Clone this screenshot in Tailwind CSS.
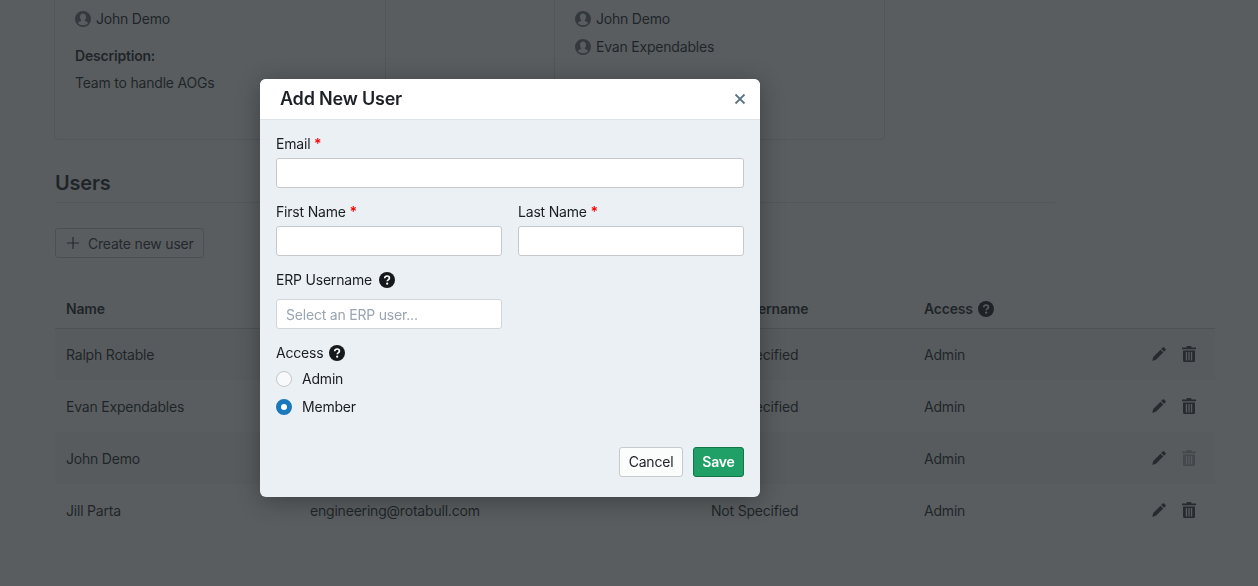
<!DOCTYPE html>
<html lang="en">
<head>
<meta charset="utf-8">
<title>Add New User</title>
<script src="https://cdn.jsdelivr.net/npm/@tailwindcss/browser@4"></script>
</head>
<body class="h-[586px] overflow-hidden bg-white font-['Inter',sans-serif] text-[14px] leading-5 tracking-[-0.2px] text-[#1a1e22]">
<main class="-mt-[40px] px-[55px]">
  <div class="-ml-px flex">
    <section class="box-border h-[180px] w-[332px] rounded-[4px] border border-[#dee2e6] px-5 pt-5">
      <p class="mb-2 font-semibold">Owner:</p>
      <p class="flex items-center gap-[5px]">
        <svg class="h-4 w-4 text-[#6c7177]" viewBox="0 0 16 16" fill="currentColor"><path fill-rule="evenodd" d="M8 0a8 8 0 1 1 0 16A8 8 0 0 1 8 0Zm0 2.600c-1.800 0-3 1.500-3 3.400 0 1.200.5 2.300 1.200 3 .2.300.1.700-.2.900l-2.300 1.200c-.3.200-.5.500-.5.800v.3c0 .7 1.900 2 4.800 2s4.800-1.300 4.800-2v-.3c0-.3-.2-.6-.5-.8L10 9.900c-.3-.2-.4-.6-.2-.9.700-.7 1.200-1.800 1.200-3 0-1.900-1.200-3.400-3-3.400Z"/></svg>
        John Demo
      </p>
      <p class="mt-[17px] font-semibold">Description:</p>
      <p class="mt-[7px]">Team to handle AOGs</p>
    </section>
    <section class="ml-[168px] box-border h-[180px] w-[331px] rounded-[4px] border border-[#dee2e6] px-5 pt-5">
      <p class="mb-2 font-semibold">Owner:</p>
      <p class="flex items-center gap-[5px]">
        <svg class="h-4 w-4 text-[#6c7177]" viewBox="0 0 16 16" fill="currentColor"><path fill-rule="evenodd" d="M8 0a8 8 0 1 1 0 16A8 8 0 0 1 8 0Zm0 2.600c-1.800 0-3 1.500-3 3.400 0 1.200.5 2.300 1.200 3 .2.300.1.700-.2.900l-2.300 1.200c-.3.200-.5.500-.5.800v.3c0 .7 1.900 2 4.800 2s4.800-1.300 4.800-2v-.3c0-.3-.2-.6-.5-.8L10 9.900c-.3-.2-.4-.6-.2-.9.700-.7 1.200-1.800 1.200-3 0-1.900-1.200-3.400-3-3.400Z"/></svg>
        John Demo
      </p>
      <p class="mt-2 flex items-center gap-[5px]">
        <svg class="h-4 w-4 text-[#6c7177]" viewBox="0 0 16 16" fill="currentColor"><path fill-rule="evenodd" d="M8 0a8 8 0 1 1 0 16A8 8 0 0 1 8 0Zm0 2.600c-1.800 0-3 1.500-3 3.400 0 1.200.5 2.300 1.200 3 .2.300.1.700-.2.900l-2.300 1.200c-.3.200-.5.500-.5.800v.3c0 .7 1.900 2 4.800 2s4.800-1.300 4.800-2v-.3c0-.3-.2-.6-.5-.8L10 9.900c-.3-.2-.4-.6-.2-.9.700-.7 1.200-1.800 1.200-3 0-1.900-1.200-3.400-3-3.400Z"/></svg>
        Evan Expendables
      </p>
      <p class="mt-[20px] font-semibold">Members:</p>
    </section>
  </div>

  <h2 class="mt-[29px] w-[1000px] border-b border-[#e4e7ea] pb-[5px] text-[20px] leading-7 font-semibold">Users</h2>

  <button class="mt-[25px] flex h-[30px] w-[149px] items-center gap-[9px] rounded-[3px] border border-[#c4c8cc] pl-[11px] text-[#2b3036]">
    <svg class="h-3 w-3" viewBox="0 0 12 12" fill="none" stroke="currentColor" stroke-width="1.200"><path d="M6 0v12M0 6h12"/></svg>
    <span class="pt-px">Create new user</span>
  </button>

  <table class="mt-8 w-[1160px] table-fixed border-collapse text-left">
    <colgroup>
      <col class="w-[244px]"><col class="w-[401px]"><col class="w-[213px]"><col class="w-[190px]"><col class="w-[112px]">
    </colgroup>
    <thead>
      <tr class="h-[38px] border-b border-[#cfd3d7]">
        <th class="px-[11px] font-semibold">Name</th>
        <th class="px-[11px] font-semibold">Email</th>
        <th class="px-[11px] font-semibold">ERP Username</th>
        <th class="px-[11px] font-semibold">
          <span class="flex items-center gap-[5px]">Access
            <svg class="h-4 w-4 text-[#16191c]" viewBox="0 0 16 16"><circle cx="8" cy="8" r="8" fill="currentColor"/><path d="M5.700 6.200c0-1.400 1-2.200 2.400-2.200 1.300 0 2.300.8 2.300 2 0 1-.6 1.500-1.200 1.900-.6.400-.9.600-.9 1.300" fill="none" stroke="#fff" stroke-width="1.700"/><circle cx="8.200" cy="11.700" r="1.100" fill="#fff"/></svg>
          </span>
        </th>
        <th></th>
      </tr>
    </thead>
    <tbody>
      <tr class="h-[52px] bg-[#f5f6f6]">
        <td class="px-[11px] pt-[2px]">Ralph Rotable</td><td class="px-[11px] pt-[2px]">ralph@rotabull.com</td><td class="px-[11px] pt-[2px]">Not Specified</td><td class="px-[11px] pt-[2px]">Admin</td>
        <td class="pl-[49px]"><span class="flex items-center gap-4 text-[#343a40]">
          <svg class="h-[14px] w-[14px]" viewBox="0 0 14 14" fill="currentColor"><path d="M10.600.6a1.200 1.200 0 0 1 1.700 0l1.100 1.100a1.200 1.200 0 0 1 0 1.700l-1.400 1.400-2.800-2.800ZM8.500 2.700l2.800 2.800-7.300 7.300L.2 14l1-3.900Z"/></svg>
          <svg class="h-4 w-[14px]" viewBox="0 0 14 16" fill="currentColor"><path fill-rule="evenodd" d="M5 0h4l.7 1.500H14v1.700H0V1.500h4.300ZM1 4.400h12V14.500A1.500 1.500 0 0 1 11.500 16h-9A1.500 1.500 0 0 1 1 14.500ZM3.800 6v8.400h1.300V6Zm2.550 0v8.400h1.300V6Zm2.550 0v8.400h1.300V6Z"/></svg>
        </span></td>
      </tr>
      <tr class="h-[52px]">
        <td class="px-[11px] pt-[2px]">Evan Expendables</td><td class="px-[11px] pt-[2px]">evan@rotabull.com</td><td class="px-[11px] pt-[2px]">Not Specified</td><td class="px-[11px] pt-[2px]">Admin</td>
        <td class="pl-[49px]"><span class="flex items-center gap-4 text-[#343a40]">
          <svg class="h-[14px] w-[14px]" viewBox="0 0 14 14" fill="currentColor"><path d="M10.600.6a1.200 1.200 0 0 1 1.700 0l1.100 1.100a1.200 1.200 0 0 1 0 1.700l-1.400 1.400-2.800-2.800ZM8.500 2.700l2.800 2.800-7.300 7.300L.2 14l1-3.900Z"/></svg>
          <svg class="h-4 w-[14px]" viewBox="0 0 14 16" fill="currentColor"><path fill-rule="evenodd" d="M5 0h4l.7 1.500H14v1.700H0V1.500h4.300ZM1 4.400h12V14.500A1.500 1.500 0 0 1 11.500 16h-9A1.500 1.500 0 0 1 1 14.500ZM3.800 6v8.400h1.300V6Zm2.550 0v8.400h1.300V6Zm2.550 0v8.400h1.300V6Z"/></svg>
        </span></td>
      </tr>
      <tr class="h-[52px] bg-[#f5f6f6]">
        <td class="px-[11px] pt-[2px]">John Demo</td><td class="px-[11px] pt-[2px]">john@rotabull.com</td><td class="px-[11px] pt-[2px]">jdemo</td><td class="px-[11px] pt-[2px]">Admin</td>
        <td class="pl-[49px]"><span class="flex items-center gap-4 text-[#343a40]">
          <svg class="h-[14px] w-[14px]" viewBox="0 0 14 14" fill="currentColor"><path d="M10.600.6a1.200 1.200 0 0 1 1.700 0l1.100 1.100a1.200 1.200 0 0 1 0 1.700l-1.400 1.400-2.800-2.800ZM8.500 2.700l2.800 2.800-7.300 7.300L.2 14l1-3.900Z"/></svg>
          <svg class="h-4 w-[14px] opacity-40" viewBox="0 0 14 16" fill="currentColor"><path fill-rule="evenodd" d="M5 0h4l.7 1.500H14v1.700H0V1.500h4.300ZM1 4.400h12V14.500A1.500 1.500 0 0 1 11.500 16h-9A1.500 1.500 0 0 1 1 14.500ZM3.800 6v8.400h1.300V6Zm2.550 0v8.400h1.300V6Zm2.550 0v8.400h1.300V6Z"/></svg>
        </span></td>
      </tr>
      <tr class="h-[52px]">
        <td class="px-[11px] pt-[2px]">Jill Parta</td><td class="px-[11px] pt-[2px]">engineering@rotabull.com</td><td class="px-[11px] pt-[2px]">Not Specified</td><td class="px-[11px] pt-[2px]">Admin</td>
        <td class="pl-[49px]"><span class="flex items-center gap-4 text-[#343a40]">
          <svg class="h-[14px] w-[14px]" viewBox="0 0 14 14" fill="currentColor"><path d="M10.600.6a1.200 1.200 0 0 1 1.700 0l1.100 1.100a1.200 1.200 0 0 1 0 1.700l-1.400 1.400-2.800-2.800ZM8.500 2.700l2.800 2.800-7.300 7.300L.2 14l1-3.900Z"/></svg>
          <svg class="h-4 w-[14px]" viewBox="0 0 14 16" fill="currentColor"><path fill-rule="evenodd" d="M5 0h4l.7 1.500H14v1.700H0V1.500h4.300ZM1 4.400h12V14.500A1.500 1.500 0 0 1 11.500 16h-9A1.500 1.500 0 0 1 1 14.500ZM3.800 6v8.400h1.300V6Zm2.550 0v8.400h1.300V6Zm2.550 0v8.400h1.300V6Z"/></svg>
        </span></td>
      </tr>
    </tbody>
  </table>
</main>

<div class="fixed inset-0 bg-[#22272b]/75"></div>

<div role="dialog" class="absolute top-[79px] left-[260px] w-[500px] overflow-hidden rounded-[6px] bg-[#ebf0f4] shadow-[0_4px_24px_rgba(0,0,0,0.3)]">
  <header class="flex h-[41px] items-center justify-between border-b border-[#dde2e6] bg-white pr-[14px] pl-5">
    <h3 class="text-[18px] font-semibold text-[#1d2126]">Add New User</h3>
    <svg class="h-3 w-3 text-[#5f7486]" viewBox="0 0 12 12" fill="none" stroke="currentColor" stroke-width="1.800"><path d="M1.500 1.500l9 9M10.500 1.500l-9 9"/></svg>
  </header>
  <form class="px-4 pt-[14px] pb-5">
    <label class="block">Email <span class="font-semibold text-[#ff0000]">*</span></label>
    <input class="mt-1 box-border block h-[30px] w-full rounded-[3px] border border-[#c6c9cc] bg-white">
    <div class="mt-[14px] grid grid-cols-2 gap-4">
      <div>
        <label class="block">First Name <span class="font-semibold text-[#ff0000]">*</span></label>
        <input class="mt-1 box-border block h-[30px] w-full rounded-[3px] border border-[#c6c9cc] bg-white">
      </div>
      <div>
        <label class="block">Last Name <span class="font-semibold text-[#ff0000]">*</span></label>
        <input class="mt-1 box-border block h-[30px] w-full rounded-[3px] border border-[#c6c9cc] bg-white">
      </div>
    </div>
    <label class="mt-[14px] flex items-center gap-[7px]">ERP Username
      <svg class="h-4 w-4 text-[#16191c]" viewBox="0 0 16 16"><circle cx="8" cy="8" r="8" fill="currentColor"/><path d="M5.700 6.200c0-1.400 1-2.200 2.400-2.200 1.300 0 2.300.8 2.300 2 0 1-.6 1.500-1.200 1.900-.6.400-.9.600-.9 1.300" fill="none" stroke="#fff" stroke-width="1.700"/><circle cx="8.200" cy="11.700" r="1.100" fill="#fff"/></svg>
    </label>
    <input placeholder="Select an ERP user..." class="mt-[9px] box-border block h-[30px] w-[226px] rounded-[3px] border border-[#d3d6d9] bg-white px-[9px] placeholder:text-[#9aa5b1]">
    <label class="mt-[14px] flex items-center gap-[6px]">Access
      <svg class="h-4 w-4 text-[#16191c]" viewBox="0 0 16 16"><circle cx="8" cy="8" r="8" fill="currentColor"/><path d="M5.700 6.200c0-1.400 1-2.200 2.400-2.200 1.300 0 2.300.8 2.300 2 0 1-.6 1.500-1.200 1.900-.6.400-.9.600-.9 1.300" fill="none" stroke="#fff" stroke-width="1.700"/><circle cx="8.200" cy="11.700" r="1.100" fill="#fff"/></svg>
    </label>
    <div class="mt-[6px] flex items-center gap-[10px]">
      <span class="box-border h-4 w-4 rounded-full border border-[#c4c7ca] bg-[#f8f9fa]"></span>Admin
    </div>
    <div class="mt-2 flex items-center gap-[10px]">
      <span class="box-border h-4 w-4 rounded-full border-[5px] border-[#1a78bd] bg-white"></span>Member
    </div>
    <div class="mt-[30px] flex justify-end gap-[10px]">
      <button type="button" class="box-border h-[30px] w-[64px] rounded-[3px] border border-[#c6cacd] bg-[#fbfcfc] text-[#212529]">Cancel</button>
      <button type="button" class="box-border h-[30px] w-[51px] rounded-[3px] border border-[#12764a] bg-[#20a067] font-semibold text-white">Save</button>
    </div>
  </form>
</div>
</body>
</html>
